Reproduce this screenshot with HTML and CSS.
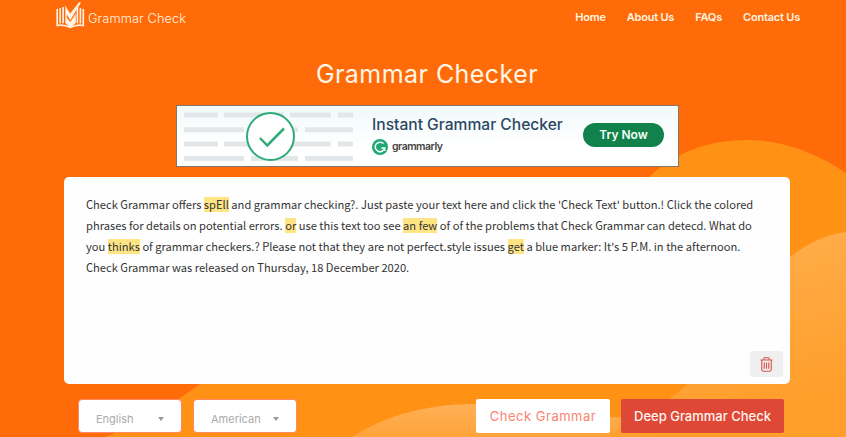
FILE: index.html
```html
<!DOCTYPE html>
<html lang="en">
<head>
<meta charset="utf-8">
<title>Grammar Checker</title>
<link rel="stylesheet" href="styles.css">
</head>
<body>
<svg class="backdrop" viewBox="0 0 846 437" aria-hidden="true">
  <defs>
    <linearGradient id="peach" x1="0" y1="0" x2="0.3" y2="1"><stop offset="0" stop-color="#ffb052"/><stop offset="1" stop-color="#ff9e2a"/></linearGradient>
    <linearGradient id="hill" x1="0" y1="0" x2="0" y2="1"><stop offset="0" stop-color="#ffb056"/><stop offset="1" stop-color="#ffa33a"/></linearGradient>
  </defs>
  <path fill="#ff9114" d="M105 437C140 423 158 414 180 398L200 384C300 310 580 250 650 176C674 154 705 140 748 140C785 140 820 155 846 173V437Z"/>
  <path fill="url(#hill)" d="M352 437C385 416 425 404 475 404C540 404 590 420 625 417V437Z"/>
  <path fill="url(#peach)" d="M600 437C635 425 655 407 672 397L688 384C725 350 755 285 790 257C808 243 827 234 846 232V437Z"/>
</svg>
<div class="page">
  <header class="header">
    <a class="brand">
      <svg class="brand-mark" viewBox="0 0 29 28">
        <g fill="none" stroke="#fff3e6" stroke-width="1.6">
          <path d="M1.2 8V24.5C5 23.7 10 24.2 14.3 26.6C18.5 24.2 23.500 23.7 27.3 24.5V8"/>
          <path d="M4.1 7V22.6M7.1 6V22.3M24.4 7V22.6M21.4 6V22.3"/>
        </g>
        <path fill="#fff3e6" d="M9.3 4.5L14.1 12.5L23.3 1L25 1.6L14.3 19.3L10.8 13.5V21L14.3 24.5L18.3 21V15L19.8 12.5V22L14.3 26.5L9.3 22Z"/>
        <path fill="#fff3e6" d="M10 16L14.3 21L19 14V22L14.3 26L10 22Z"/>
      </svg>
      <span class="brand-name">Grammar Check</span>
    </a>
    <nav class="nav"><a>Home</a><a>About Us</a><a>FAQs</a><a>Contact Us</a></nav>
  </header>
  <h1 class="title">Grammar Checker</h1>
  <section class="ad">
    <svg class="ad-art" viewBox="0 0 180 60">
      <path stroke="#e4e7e9" stroke-width="5" d="M7 9H41M47 9H107M113 9H154M161 9H176M7 23.700H67M74 23.700H121M128 23.700H176M7 38H41M47 38H107M113 38H154M161 38H176M7 52.500H67M74 52.500H121M128 52.500H176"/>
      <circle cx="93.500" cy="30.500" r="23.500" fill="#fff" stroke="#2dab78" stroke-width="2"/>
      <path d="M83 32L90.300 39.500L107 22.500" fill="none" stroke="#2dab78" stroke-width="2.500"/>
    </svg>
    <div class="ad-copy">
      <div class="ad-title">Instant Grammar Checker</div>
      <div class="ad-brand">
        <svg class="ad-logo" viewBox="0 0 16 16"><circle cx="8" cy="8" r="8" fill="#20a875"/><path d="M11.500 4.600A4.800 4.800 0 1 0 12.700 9.100H9.300M12.700 9.100V12" fill="none" stroke="#fff" stroke-width="1.500"/></svg>
        <span>grammarly</span>
      </div>
    </div>
    <a class="ad-button">Try Now</a>
  </section>
  <main class="editor">
    <p class="text"><span class="line">Check Grammar offers <mark>spEll</mark> and grammar checking?. Just paste your text here and click the 'Check Text' button.! Click the colored</span>
<span class="line">phrases for details on potential errors. <mark>or</mark> use this text too see <mark>an few</mark> of of the problems that Check Grammar can detecd. What do</span>
<span class="line">you <mark>thinks</mark> of grammar checkers.? Please not that they are not perfect.style issues <mark>get</mark> a blue marker: It's 5 P.M. in the afternoon.</span>
<span class="line">Check Grammar was released on Thursday, 18 December 2020.</span></p>
    <button class="trash" aria-label="Clear">
      <svg viewBox="0 0 14 16" fill="none" stroke="#d9534a" stroke-width="1.200"><path d="M.5 3.200H13.500M4.200 3V1.300Q4.200.7 4.800.7H9.200Q9.800.7 9.800 1.300V3M1.900 3.300V13.500Q1.900 15.200 3.500 15.200H10.500Q12.100 15.200 12.100 13.500V3.300M4.600 5.800V12.700M7 5.800V12.700M9.400 5.800V12.700"/></svg>
    </button>
  </main>
  <div class="actions">
    <div class="select"><span>English</span><i></i></div>
    <div class="select"><span>American</span><i></i></div>
    <button class="btn check">Check Grammar</button>
    <button class="btn deep">Deep Grammar Check</button>
  </div>
</div>
</body>
</html>
```
FILE: styles.css
```css
* { box-sizing: border-box; }
body { margin: 0; background: #ff6b08; font-family: Inter, "Open Sans", sans-serif; overflow: hidden; }
button { margin: 0; padding: 0; border: 0; font-family: inherit; }
.backdrop { position: absolute; inset: 0; width: 846px; height: 437px; }
.page { position: relative; width: 846px; height: 437px; display: flex; flex-direction: column; }
.header { height: 40px; padding: 0 46px 0 56px; display: flex; justify-content: space-between; align-items: flex-start; color: #fff3e2; }
.brand { display: flex; gap: 3px; }
.brand-mark { width: 29px; height: 28px; margin-top: 1px; }
.brand-name { margin-top: 10px; font-size: 12.800px; line-height: 17px; font-weight: 300; letter-spacing: .1px; white-space: nowrap; }
.nav { display: flex; gap: 21px; margin-top: 9px; font-size: 11px; line-height: 16px; font-weight: 600; letter-spacing: -.2px; white-space: nowrap; }
.title { margin: 18px 0 0; height: 32px; width: 854px; line-height: 32px; text-align: center; color: #fff7e8; font-size: 25px; font-weight: 400; letter-spacing: .45px; white-space: nowrap; }
.ad { margin: 15px 0 0 176px; width: 503px; height: 62px; border: 1px solid #83756a; background: linear-gradient(#f1f9fb, #fff 65%); display: flex; align-items: flex-start; }
.ad-art { width: 180px; height: 60px; flex: none; }
.ad-copy { width: 210px; margin-left: 15px; flex: none; white-space: nowrap; }
.ad-title { height: 20px; margin-top: 9px; line-height: 20px; color: #2c4763; font-size: 15.600px; font-weight: 500; }
.ad-brand { display: flex; align-items: center; gap: 4px; margin-top: 3px; height: 17px; color: #444; font-size: 10.500px; font-weight: 600; letter-spacing: -.5px; }
.ad-logo { width: 16px; height: 16px; }
.ad-button { width: 81px; height: 24px; margin: 17px 0 0 1px; border-radius: 12px; background: #12824d; color: #f4fff8; text-align: center; font-size: 12px; line-height: 24px; font-weight: 600; white-space: nowrap; }
.editor { margin: 10px 0 0 64px; width: 726px; height: 207px; border-radius: 5px; background: #fefefe; padding: 17px 7px 7px 22px; display: flex; flex-direction: column; justify-content: space-between; }
.text { margin: 0; color: #333; font: 11.140px/20.900px "Noto Sans CJK SC", sans-serif; white-space: nowrap; }
.line { display: block; width: max-content; height: 20.900px; }
mark { background: #ffe484; color: inherit; padding: 0; line-height: 15px; display: inline-block; }
.trash { align-self: flex-end; width: 33px; height: 26px; border-radius: 2px; background: #efefef; display: grid; place-items: center; }
.trash svg { width: 13px; height: 15px; }
.actions { display: flex; margin: 15px 0 0 78px; height: 34px; }
.select { width: 104px; height: 34px; margin-right: 11px; border: 1px solid #ff8a65; border-radius: 4px; background: #fff; color: #aaa; font-size: 11px; line-height: 38px; padding: 0 17px; display: flex; justify-content: space-between; white-space: nowrap; }
.select i { width: 0; height: 0; margin-top: 17px; border: 3.500px solid transparent; border-top: 4px solid #999; border-bottom: 0; }
.btn { height: 34px; border-radius: 2px; white-space: nowrap; }
.check { width: 134px; margin-left: 168px; background: #fff; color: #f98472; font-size: 13px; letter-spacing: .5px; }
.deep { width: 163px; margin-left: 11px; background: #df4837; color: #fff5ee; font-size: 13px; font-weight: 500; }
```
